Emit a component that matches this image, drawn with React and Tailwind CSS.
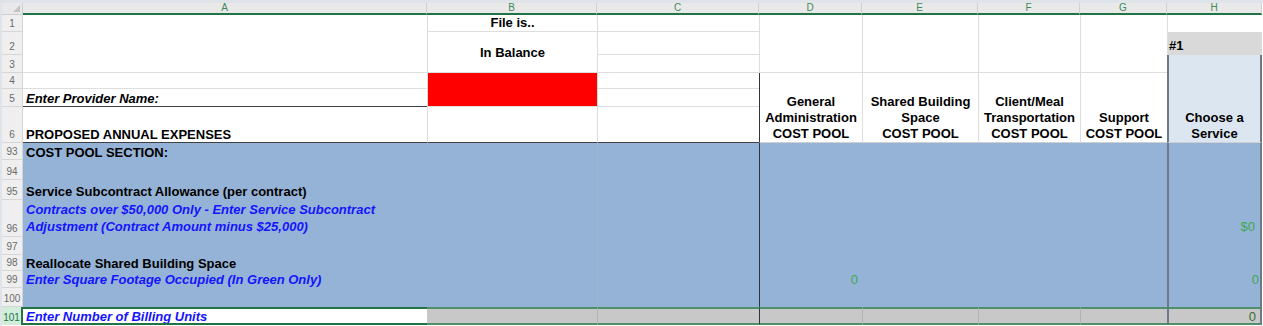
import React from "react";

const font = { fontFamily: '"Liberation Sans", Arial, sans-serif' };

const rowNums = ["1", "2", "3", "4", "5", "6", "93", "94", "95", "96", "97", "98", "99", "100", "101"];
const rowStarts = [
  "row-start-2",
  "row-start-3",
  "row-start-4",
  "row-start-5",
  "row-start-6",
  "row-start-7",
  "row-start-8",
  "row-start-9",
  "row-start-10",
  "row-start-11",
  "row-start-12",
  "row-start-13",
  "row-start-14",
  "row-start-15",
  "row-start-16",
];

const letters = [
  ["A", "col-start-2"],
  ["B", "col-start-3"],
  ["C", "col-start-4"],
  ["D", "col-start-5"],
  ["E", "col-start-6"],
  ["F", "col-start-7"],
  ["G", "col-start-8"],
  ["H", "col-start-9"],
];

const Cell = ({ className = "", children }) => (
  <div className={"overflow-hidden " + className}>{children}</div>
);

const blueText = "text-[#1414ff] italic font-bold";

export default function App() {
  return (
    <div
      className="w-[1263px] h-[326px] overflow-hidden bg-white border-t-[3px] border-l-2 border-[#dfe4ea] text-[13px] leading-[15px] text-black"
      style={font}
    >
      <div className="grid grid-cols-[21px_404px_170px_162px_103px_116px_102px_87px_95px] grid-rows-[12px_17px_23px_18px_16px_18px_36px_17px_20px_20px_37px_18px_16px_17px_19px_18px]">
        {/* corner */}
        <Cell className="col-start-1 row-start-1 bg-[#e9e9e9] border-r border-b border-[#cfcfcf] relative">
          <svg className="absolute right-[2px] bottom-[2px]" width="7" height="7" viewBox="0 0 7 7">
            <path d="M7 0 L7 7 L0 7 Z" fill="#c4c4c4" />
          </svg>
        </Cell>

        {/* column letters */}
        {letters.map(([l, c]) => (
          <Cell
            key={l}
            className={
              c +
              " row-start-1 bg-[#e9e9e9] border-r border-[#d0d0d0] border-b-2 border-b-[#217346] flex items-center justify-center text-[10px] leading-[10px] text-[#3f8a5a]"
            }
          >
            {l}
          </Cell>
        ))}

        {/* row numbers */}
        {rowNums.map((n, i) => (
          <Cell
            key={n}
            className={
              rowStarts[i] +
              (n === "101"
                ? " col-start-1 bg-[#d3eddb] text-[#217346] border-r-2 border-[#217346]"
                : " col-start-1 bg-[#efefef] text-[#6a6a6a] border-r border-b border-[#d6d6d6]") +
              " flex items-end justify-center pb-[2px] text-[10px] leading-[10px]"
            }
          >
            {n}
          </Cell>
        ))}

        {/* rows 1-3 */}
        <Cell className="col-start-2 row-start-2 row-span-3 border-b border-[#dedede]" />
        <Cell className="col-start-3 row-start-2 border-l border-b border-[#dedede] flex items-end justify-center font-bold pb-[1px]">
          File is..
        </Cell>
        <Cell className="col-start-3 row-start-3 row-span-2 border-l border-b border-[#dedede] flex items-center justify-center font-bold pt-[1px]">
          In Balance
        </Cell>
        <Cell className="col-start-4 row-start-2 border-l border-b border-[#dedede]" />
        <Cell className="col-start-4 row-start-3 border-l border-b border-[#dedede]" />
        <Cell className="col-start-4 row-start-4 border-l border-b border-[#dedede]" />
        <Cell className="col-start-5 row-start-2 row-span-3 border-l border-b border-[#dedede]" />
        <Cell className="col-start-6 row-start-2 row-span-3 border-l border-b border-[#dedede]" />
        <Cell className="col-start-7 row-start-2 row-span-3 border-l border-b border-[#dedede]" />
        <Cell className="col-start-8 row-start-2 row-span-3 border-l border-b border-[#dedede]" />
        <Cell className="col-start-9 row-start-2 border-l border-[#dedede]" />
        <Cell className="col-start-9 row-start-3 bg-[#d9d9d9] border-l border-[#dedede] flex items-end font-bold pl-[1px] pb-[2px]">
          #1
        </Cell>

        {/* rows 4-6 */}
        <Cell className="col-start-2 row-start-5 border-b border-[#dedede]" />
        <Cell className="col-start-2 row-start-6 border-b border-[#404040] flex items-end pl-[3px] font-bold italic">
          Enter Provider Name:
        </Cell>
        <Cell className="col-start-3 row-start-5 row-span-2 bg-[#ff0000] border-l border-b border-[#dedede]" />
        <Cell className="col-start-4 row-start-5 border-l border-b border-[#dedede]" />
        <Cell className="col-start-4 row-start-6 border-l border-b border-[#dedede]" />
        <Cell className="col-start-2 row-start-7 border-b border-[#404040] flex items-end pl-[3px] font-bold">
          PROPOSED ANNUAL EXPENSES
        </Cell>
        <Cell className="col-start-3 row-start-7 border-l border-l-[#dedede] border-b border-b-[#404040]" />
        <Cell className="col-start-4 row-start-7 border-l border-l-[#dedede] border-b border-b-[#404040]" />

        <Cell className="col-start-5 row-start-5 row-span-3 border-l border-l-[#2e3440] border-b border-b-[#d0d0d0] flex items-end justify-center text-center font-bold leading-[16px]">
          <div>
            General
            <br />
            Administration
            <br />
            COST POOL
          </div>
        </Cell>
        <Cell className="col-start-6 row-start-5 row-span-3 border-l border-l-[#dedede] border-b border-b-[#d0d0d0] flex items-end justify-center text-center font-bold leading-[16px]">
          <div>
            Shared Building
            <br />
            Space
            <br />
            COST POOL
          </div>
        </Cell>
        <Cell className="col-start-7 row-start-5 row-span-3 border-l border-l-[#dedede] border-b border-b-[#d0d0d0] flex items-end justify-center text-center font-bold leading-[16px]">
          <div>
            Client/Meal
            <br />
            Transportation
            <br />
            COST POOL
          </div>
        </Cell>
        <Cell className="col-start-8 row-start-5 row-span-3 border-l border-l-[#dedede] border-b border-b-[#d0d0d0] flex items-end justify-center text-center font-bold leading-[16px]">
          <div>
            Support
            <br />
            COST POOL
          </div>
        </Cell>
        <Cell className="col-start-9 row-start-4 row-span-4 bg-[#dce6f1] border-l-2 border-r-2 border-[#6f7886] border-b border-b-[#d0d0d0] flex items-end justify-center text-center font-bold leading-[16px]">
          <div>
            Choose a
            <br />
            Service
          </div>
        </Cell>

        {/* cost pool section */}
        <Cell className="col-start-2 row-start-8 bg-[#95b3d7] flex items-end pl-[3px] font-bold">
          COST POOL SECTION:
        </Cell>
        <Cell className="col-start-2 row-start-9 bg-[#95b3d7]" />
        <Cell className="col-start-2 row-start-10 bg-[#95b3d7] flex items-end pl-[3px] pb-[1px] font-bold">
          Service Subcontract Allowance (per contract)
        </Cell>
        <Cell className={"col-start-2 row-start-11 bg-[#95b3d7] flex items-end pl-[3px] pb-[2px] leading-[17px] " + blueText}>
          <div>
            Contracts over $50,000 Only - Enter Service Subcontract
            <br />
            Adjustment (Contract Amount minus $25,000)
          </div>
        </Cell>
        <Cell className="col-start-2 row-start-12 bg-[#95b3d7]" />
        <Cell className="col-start-2 row-start-13 bg-[#95b3d7] flex items-end pl-[3px] font-bold">
          Reallocate Shared Building Space
        </Cell>
        <Cell className={"col-start-2 row-start-14 bg-[#95b3d7] flex items-end pl-[3px] pb-[1px] " + blueText}>
          Enter Square Footage Occupied (In Green Only)
        </Cell>
        <Cell className="col-start-2 row-start-15 bg-[#95b3d7]" />

        <Cell className="col-start-3 row-start-8 row-span-8 bg-[#95b3d7]" />
        <Cell className="col-start-4 row-start-8 row-span-8 bg-[#95b3d7] border-l border-[#a5b3c6]" />
        <Cell className="col-start-5 row-start-8 row-span-6 bg-[#95b3d7] border-l border-[#2e3440]" />
        <Cell className="col-start-5 row-start-14 bg-[#95b3d7] border-l border-[#2e3440] flex items-end justify-end pr-[4px] pb-[1px] font-normal text-[13px] text-[#3ea84c]">
          0
        </Cell>
        <Cell className="col-start-5 row-start-15 bg-[#95b3d7] border-l border-[#2e3440]" />
        <Cell className="col-start-6 col-span-3 row-start-8 row-span-8 bg-[#95b3d7]" />

        <Cell className="col-start-9 row-start-8 row-span-3 bg-[#95b3d7] border-l-2 border-r-2 border-[#6f7886]" />
        <Cell className="col-start-9 row-start-11 bg-[#95b3d7] border-l-2 border-r-2 border-[#6f7886] flex items-end justify-end pr-[5px] pb-[3px] text-[13px] text-[#3ea84c]">
          $0
        </Cell>
        <Cell className="col-start-9 row-start-12 row-span-2 bg-[#95b3d7] border-l-2 border-r-2 border-[#6f7886]" />
        <Cell className="col-start-9 row-start-14 bg-[#95b3d7] border-l-2 border-r-2 border-[#6f7886] flex items-end justify-end pr-[1px] pb-[1px] text-[13px] text-[#3ea84c]">
          0
        </Cell>
        <Cell className="col-start-9 row-start-15 bg-[#95b3d7] border-l-2 border-r-2 border-[#6f7886]" />

        {/* row 101 */}
        <Cell className={"col-start-2 row-start-16 bg-white border-y-2 border-[#217346] flex items-center pl-[3px] " + blueText}>
          Enter Number of Billing Units
        </Cell>
        <Cell className="col-start-3 row-start-16 bg-[#c8c8c8] border-y-2 border-[#4f8f6a]" />
        <Cell className="col-start-4 row-start-16 bg-[#c8c8c8] border-y-2 border-y-[#4f8f6a] border-l border-l-[#b2b2b2]" />
        <Cell className="col-start-5 row-start-16 bg-[#c8c8c8] border-y-2 border-y-[#4f8f6a] border-l border-l-[#2e3440]" />
        <Cell className="col-start-6 row-start-16 bg-[#c8c8c8] border-y-2 border-y-[#4f8f6a] border-l border-l-[#b2b2b2]" />
        <Cell className="col-start-7 row-start-16 bg-[#c8c8c8] border-y-2 border-y-[#4f8f6a] border-l border-l-[#b2b2b2]" />
        <Cell className="col-start-8 row-start-16 bg-[#c8c8c8] border-y-2 border-y-[#4f8f6a] border-l border-l-[#b2b2b2]" />
        <Cell className="col-start-9 row-start-16 bg-[#c8c8c8] border-y-2 border-y-[#4f8f6a] border-l-2 border-r-2 border-x-[#6f7886] flex items-center justify-end pr-[4px] text-[13px] text-[#3b6b34]">
          0
        </Cell>
      </div>
    </div>
  );
}
